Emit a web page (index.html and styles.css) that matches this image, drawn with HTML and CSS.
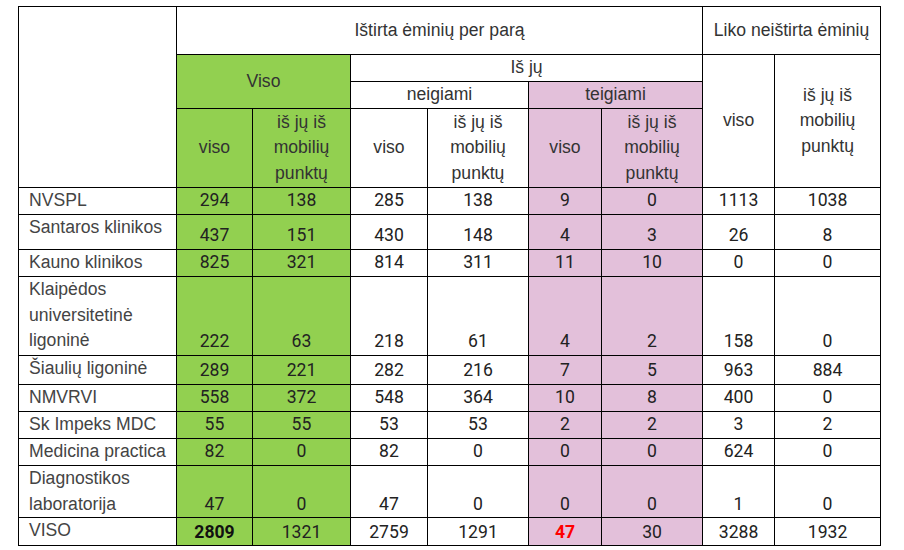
FILE: index.html
```html
<!DOCTYPE html>
<html lang="lt">
<head>
<meta charset="utf-8">
<title>Ištirta ėminių per parą</title>
<link rel="stylesheet" href="styles.css">
</head>
<body>
<table class="stats">
  <colgroup>
    <col class="c-label">
    <col class="c2"><col class="c3"><col class="c4"><col class="c5">
    <col class="c6"><col class="c7"><col class="c8"><col class="c9">
  </colgroup>
  <thead>
    <tr class="h1">
      <th rowspan="4"></th>
      <th colspan="6">Ištirta ėminių per parą</th>
      <th colspan="2">Liko neištirta ėminių</th>
    </tr>
    <tr class="h2">
      <th colspan="2" rowspan="2" class="green">Viso</th>
      <th colspan="4">Iš jų</th>
      <th rowspan="3">viso</th>
      <th rowspan="3">iš jų iš mobilių punktų</th>
    </tr>
    <tr class="h3">
      <th colspan="2">neigiami</th>
      <th colspan="2" class="pink">teigiami</th>
    </tr>
    <tr class="h4">
      <th class="green">viso</th>
      <th class="green">iš jų iš mobilių punktų</th>
      <th>viso</th>
      <th>iš jų iš mobilių punktų</th>
      <th class="pink">viso</th>
      <th class="pink">iš jų iš mobilių punktų</th>
    </tr>
  </thead>
  <tbody>
    <tr class="r27"><td class="label">NVSPL</td><td class="green">294</td><td class="green">138</td><td>285</td><td>138</td><td class="pink">9</td><td class="pink">0</td><td>1113</td><td>1038</td></tr>
    <tr class="r35"><td class="label">Santaros klinikos</td><td class="green">437</td><td class="green">151</td><td>430</td><td>148</td><td class="pink">4</td><td class="pink">3</td><td>26</td><td>8</td></tr>
    <tr class="r27"><td class="label">Kauno klinikos</td><td class="green">825</td><td class="green">321</td><td>814</td><td>311</td><td class="pink">11</td><td class="pink">10</td><td>0</td><td>0</td></tr>
    <tr class="r79"><td class="label">Klaipėdos universitetinė ligoninė</td><td class="green">222</td><td class="green">63</td><td>218</td><td>61</td><td class="pink">4</td><td class="pink">2</td><td>158</td><td>0</td></tr>
    <tr class="r29"><td class="label">Šiaulių ligoninė</td><td class="green">289</td><td class="green">221</td><td>282</td><td>216</td><td class="pink">7</td><td class="pink">5</td><td>963</td><td>884</td></tr>
    <tr class="r27"><td class="label">NMVRVI</td><td class="green">558</td><td class="green">372</td><td>548</td><td>364</td><td class="pink">10</td><td class="pink">8</td><td>400</td><td>0</td></tr>
    <tr class="r27"><td class="label">Sk Impeks MDC</td><td class="green">55</td><td class="green">55</td><td>53</td><td>53</td><td class="pink">2</td><td class="pink">2</td><td>3</td><td>2</td></tr>
    <tr class="r27"><td class="label">Medicina practica</td><td class="green">82</td><td class="green">0</td><td>82</td><td>0</td><td class="pink">0</td><td class="pink">0</td><td>624</td><td>0</td></tr>
    <tr class="r52"><td class="label">Diagnostikos laboratorija</td><td class="green">47</td><td class="green">0</td><td>47</td><td>0</td><td class="pink">0</td><td class="pink">0</td><td>1</td><td>0</td></tr>
    <tr class="r28"><td class="label">VISO</td><td class="green"><strong>2809</strong></td><td class="green">1321</td><td>2759</td><td>1291</td><td class="pink"><strong class="red">47</strong></td><td class="pink">30</td><td>3288</td><td>1932</td></tr>
  </tbody>
</table>
</body>
</html>
```
FILE: styles.css
```css
html, body {
  margin: 0;
  padding: 0;
  background: #fff;
}

.stats {
  margin: 6px 0 0 18px;
  border-collapse: collapse;
  table-layout: fixed;
  width: 863px;
  font-family: "Liberation Sans", Arial, sans-serif;
  font-size: 17.6px;
  line-height: 25.6px;
  color: #444;
}

.c-label { width: 158px; }
.c2 { width: 76px; }
.c3 { width: 98px; }
.c4 { width: 77px; }
.c5 { width: 101px; }
.c6 { width: 73px; }
.c7 { width: 101px; }
.c8 { width: 72px; }
.c9 { width: 106px; }

.stats th,
.stats td {
  border: 1px solid #000;
  padding: 0 5px;
}

.stats th {
  font-weight: normal;
  text-align: center;
  vertical-align: middle;
  color: #333;
}

.stats td {
  text-align: center;
  vertical-align: bottom;
  font-family: Roboto, "Liberation Sans", sans-serif;
  color: #222;
}

.stats td.label {
  text-align: left;
  vertical-align: top;
  padding-left: 10px;
  font-family: "Liberation Sans", Arial, sans-serif;
  color: #444;
}

.stats strong {
  font-weight: bold;
  color: #111;
}

.stats strong.red {
  color: #f00;
}

.green { background: #92d050; }
.pink { background: #e3c0da; }

.h1 { height: 48px; }
.h2 { height: 27px; }
.h3 { height: 27px; }
.h4 { height: 79px; }

.r27 { height: 27px; }
.r28 { height: 28px; }
.r29 { height: 29px; }
.r35 { height: 35px; }
.r52 { height: 52px; }
.r79 { height: 79px; }
```
